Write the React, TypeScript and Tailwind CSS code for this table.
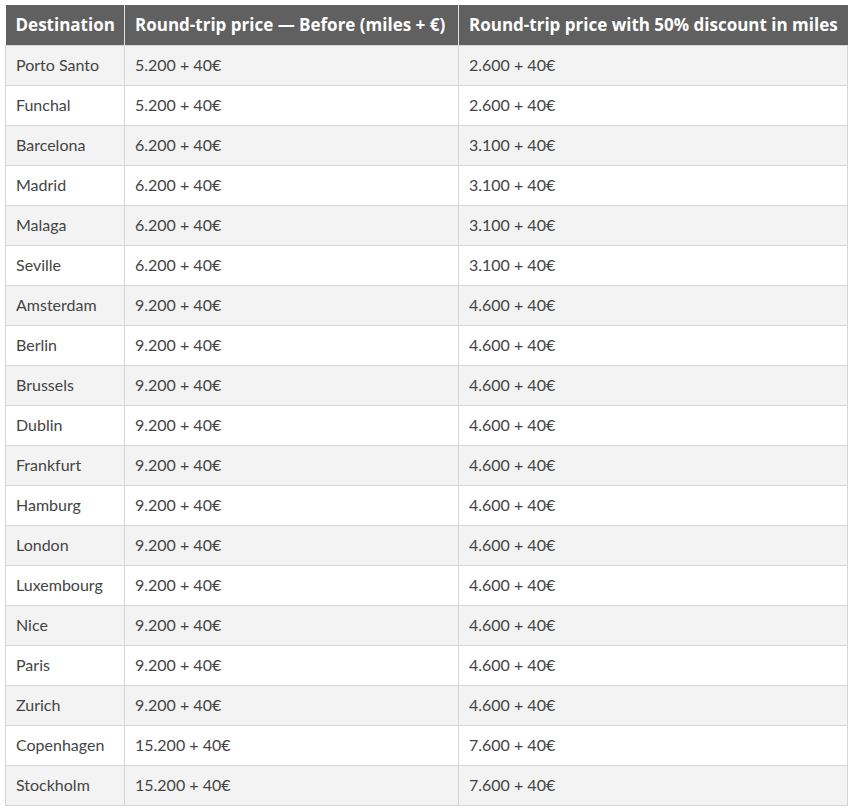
const rows: [string, string, string][] = [
  ['Porto Santo', '5.200 + 40€', '2.600 + 40€'],
  ['Funchal', '5.200 + 40€', '2.600 + 40€'],
  ['Barcelona', '6.200 + 40€', '3.100 + 40€'],
  ['Madrid', '6.200 + 40€', '3.100 + 40€'],
  ['Malaga', '6.200 + 40€', '3.100 + 40€'],
  ['Seville', '6.200 + 40€', '3.100 + 40€'],
  ['Amsterdam', '9.200 + 40€', '4.600 + 40€'],
  ['Berlin', '9.200 + 40€', '4.600 + 40€'],
  ['Brussels', '9.200 + 40€', '4.600 + 40€'],
  ['Dublin', '9.200 + 40€', '4.600 + 40€'],
  ['Frankfurt', '9.200 + 40€', '4.600 + 40€'],
  ['Hamburg', '9.200 + 40€', '4.600 + 40€'],
  ['London', '9.200 + 40€', '4.600 + 40€'],
  ['Luxembourg', '9.200 + 40€', '4.600 + 40€'],
  ['Nice', '9.200 + 40€', '4.600 + 40€'],
  ['Paris', '9.200 + 40€', '4.600 + 40€'],
  ['Zurich', '9.200 + 40€', '4.600 + 40€'],
  ['Copenhagen', '15.200 + 40€', '7.600 + 40€'],
  ['Stockholm', '15.200 + 40€', '7.600 + 40€'],
];

export default function App() {
  return (
    <div className="bg-white min-h-[810px] pt-[5px] pl-[5px]">
      <table className="w-[842px] border-collapse table-fixed font-['Lato',sans-serif] text-[16px] text-[#444]">
        <colgroup>
          <col className="w-[119px]" />
          <col className="w-[334px]" />
          <col className="w-[389px]" />
        </colgroup>
        <thead>
          <tr className="h-[40px] bg-[#606060] text-white font-['Open_Sans',sans-serif] font-bold text-[17px]">
            <th className="text-left px-[10px] border-r border-[#e5e5e5] whitespace-nowrap">Destination</th>
            <th className="text-left px-[10px] border-r border-[#e5e5e5] whitespace-nowrap">Round-trip price — Before (miles + €)</th>
            <th className="text-left px-[10px] whitespace-nowrap">Round-trip price with 50% discount in miles</th>
          </tr>
        </thead>
        <tbody>
          {rows.map(([city, before, after], i) => (
            <tr key={city} className={i % 2 === 0 ? 'h-[40px] bg-[#f3f3f3]' : 'h-[40px] bg-white'}>
              <td className="px-[10px] border border-[#d6d6d6]">{city}</td>
              <td className="px-[10px] border border-[#d6d6d6]">{before}</td>
              <td className="px-[10px] border border-[#d6d6d6]">{after}</td>
            </tr>
          ))}
        </tbody>
      </table>
    </div>
  );
}
